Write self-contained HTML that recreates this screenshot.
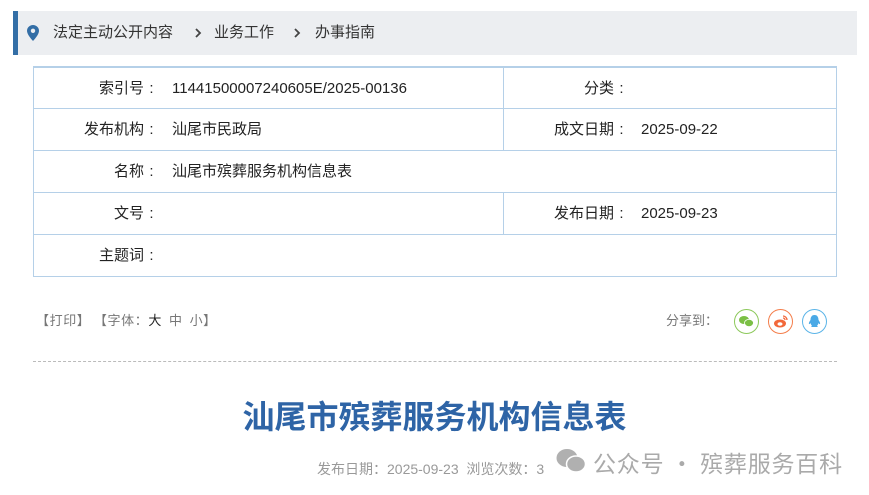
<!DOCTYPE html>
<html><head><meta charset="utf-8"><style>
*{margin:0;padding:0;box-sizing:border-box}
body{width:869px;height:495px;background:#fff;font-family:"Liberation Sans","Noto Sans CJK SC",sans-serif;position:relative;overflow:hidden;color:#222}
.c{font-family:"Noto Sans CJK SC",sans-serif}
.bc{position:absolute;left:13px;top:11px;width:844px;height:44px;background:#eceef1;border-left:5px solid #336ea6}
.bc span{position:absolute;top:13px;font-size:15px;color:#333;line-height:18px}
.bc svg.ar{position:absolute;top:17px}
.tb{position:absolute;left:33px;top:66px;width:804px;height:211px;border:1px solid #b5d0e8}
.row{position:absolute;left:0;width:802px;height:42px;border-top:1px solid #b5d0e8;font-size:15px;line-height:42px}
.row:first-child{border-top:none}
.row > span{position:absolute;white-space:nowrap}
.row i{font-style:normal;display:inline-block;width:15px;text-align:center}
.vl{position:absolute;left:469px;width:1px;background:#b5d0e8}
.ab{position:absolute;font-size:13px;color:#777;line-height:16px}
.ic{position:absolute;top:309px;width:25px;height:25px;border-radius:50%;border:1px solid}
.dash{position:absolute;left:33px;top:361px;width:804px;border-top:1px dashed #bbb}
h1{position:absolute;left:0;width:869px;top:395px;text-align:center;font-size:32px;color:#2e64a6;font-weight:bold;line-height:40px;font-family:"Noto Sans CJK SC",sans-serif}
.meta{position:absolute;left:317px;top:459px;font-size:14px;color:#999;white-space:nowrap}
.wm{position:absolute;left:593px;top:445px;font-size:23px;letter-spacing:0.8px;color:#aaa;white-space:nowrap}
</style></head><body>
<div class="bc">
<svg style="position:absolute;left:9px;top:14px" width="12" height="16" viewBox="0 0 12 16"><path d="M6 0C2.7 0 0 2.6 0 5.8 0 10 6 16 6 16s6-6 6-10.2C12 2.6 9.3 0 6 0z" fill="#336ea6"/><circle cx="6" cy="5.8" r="2.2" fill="#eceef1"/></svg>
<span style="left:35px">法定主动公开内容</span>
<svg class="ar" style="left:177px" width="7" height="10" viewBox="0 0 7 10"><path d="M1 1l4 4-4 4" stroke="#444" stroke-width="1.8" fill="none"/></svg>
<span style="left:196px">业务工作</span>
<svg class="ar" style="left:276px" width="7" height="10" viewBox="0 0 7 10"><path d="M1 1l4 4-4 4" stroke="#444" stroke-width="1.8" fill="none"/></svg>
<span style="left:297px">办事指南</span>
</div>
<div class="tb">
<div class="vl" style="top:0;height:83px"></div>
<div class="vl" style="top:126px;height:41px"></div>
<div class="row" style="top:0"><span style="right:677px">索引号<i>:</i></span><span style="left:138px">11441500007240605E/2025-00136</span><span style="right:207px">分类<i>:</i></span></div>
<div class="row" style="top:41px"><span style="right:677px">发布机构<i>:</i></span><span style="left:138px">汕尾市民政局</span><span style="right:207px">成文日期<i>:</i></span><span style="left:607px">2025-09-22</span></div>
<div class="row" style="top:83px"><span style="right:677px">名称<i>:</i></span><span style="left:138px">汕尾市殡葬服务机构信息表</span></div>
<div class="row" style="top:125px"><span style="right:677px">文号<i>:</i></span><span style="right:207px">发布日期<i>:</i></span><span style="left:607px">2025-09-23</span></div>
<div class="row" style="top:167px"><span style="right:677px">主题词<i>:</i></span></div>
</div>
<div class="ab c" style="left:36px;top:312px;letter-spacing:0.6px">【打印】 【字体：<span style="color:#222">大</span>&nbsp; 中&nbsp; 小】</div>
<div class="ab c" style="left:666px;top:312px">分享到：</div>
<div class="ic" style="left:734px;border-color:#8cc85a"><svg width="23" height="23" viewBox="0 0 23 23"><ellipse cx="9" cy="10" rx="5" ry="4" fill="#7bbf45"/><ellipse cx="14" cy="13" rx="4.5" ry="3.6" fill="#7bbf45" stroke="#fff" stroke-width="0.8"/></svg></div>
<div class="ic" style="left:768px;border-color:#f47d4a"><svg width="23" height="23" viewBox="0 0 23 23"><ellipse cx="11" cy="13.5" rx="6" ry="4" fill="#f2683a"/><ellipse cx="11" cy="14" rx="2.5" ry="1.8" fill="#fff"/><path d="M14 6a4 4 0 0 1 4 4M14 8a2 2 0 0 1 2 2" stroke="#f2683a" stroke-width="1.3" fill="none"/></svg></div>
<div class="ic" style="left:802px;border-color:#5ab4e8"><svg width="23" height="23" viewBox="0 0 23 23"><path d="M11.5 5c-3 0-4 2.5-4 5 -1 1.5-2 3-1.5 4 .5 .3 1.2-.5 1.5-1 .3 1.5 1 2.3 1.5 2.6-1 .4-1 1.2 0 1.4h5c1-.2 1-1 0-1.4.5-.3 1.2-1.1 1.5-2.6.3.5 1 1.300 1.5 1 .5-1-.5-2.5-1.5-4 0-2.5-1-5-4-5z" fill="#4aa9e6"/></svg></div>
<div class="dash"></div>
<h1>汕尾市殡葬服务机构信息表</h1>
<div class="meta">发布日期<span class="c">：</span>2025-09-23&nbsp; 浏览次数<span class="c">：</span>3</div>
<svg style="position:absolute;left:555px;top:447px" width="32" height="28" viewBox="0 0 32 28"><ellipse cx="12" cy="11" rx="10.5" ry="9" fill="#b0b0b0"/><ellipse cx="21" cy="17" rx="9.5" ry="8" fill="#b0b0b0" stroke="#fff" stroke-width="1.5"/></svg>
<div class="wm c">公众号 · 殡葬服务百科</div>
</body></html>
